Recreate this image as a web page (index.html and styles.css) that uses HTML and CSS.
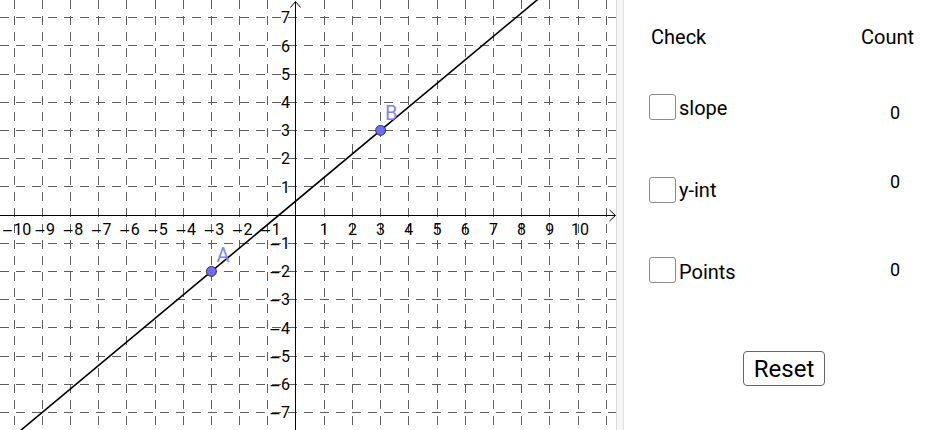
FILE: index.html
```html
<!DOCTYPE html>
<html>
<head>
<meta charset="utf-8">
<link rel="stylesheet" href="styles.css">
</head>
<body>
<div class="app">
  <div class="graph">
    <svg width="616" height="430" viewBox="0 0 616 430">
      <g class="grid">
        <line x1="14" y1="0" x2="14" y2="430"/>
        <line x1="42.2" y1="0" x2="42.2" y2="430"/>
        <line x1="70.4" y1="0" x2="70.4" y2="430"/>
        <line x1="98.6" y1="0" x2="98.6" y2="430"/>
        <line x1="126.8" y1="0" x2="126.8" y2="430"/>
        <line x1="155" y1="0" x2="155" y2="430"/>
        <line x1="183.2" y1="0" x2="183.2" y2="430"/>
        <line x1="211.4" y1="0" x2="211.4" y2="430"/>
        <line x1="239.6" y1="0" x2="239.6" y2="430"/>
        <line x1="267.8" y1="0" x2="267.8" y2="430"/>
        <line x1="324.2" y1="0" x2="324.2" y2="430"/>
        <line x1="352.4" y1="0" x2="352.4" y2="430"/>
        <line x1="380.6" y1="0" x2="380.6" y2="430"/>
        <line x1="408.8" y1="0" x2="408.8" y2="430"/>
        <line x1="437" y1="0" x2="437" y2="430"/>
        <line x1="465.2" y1="0" x2="465.2" y2="430"/>
        <line x1="493.4" y1="0" x2="493.4" y2="430"/>
        <line x1="521.6" y1="0" x2="521.6" y2="430"/>
        <line x1="549.8" y1="0" x2="549.8" y2="430"/>
        <line x1="578" y1="0" x2="578" y2="430"/>
        <line x1="606.2" y1="0" x2="606.2" y2="430"/>
        <line x1="0" y1="17.6" x2="616" y2="17.6"/>
        <line x1="0" y1="45.8" x2="616" y2="45.8"/>
        <line x1="0" y1="74" x2="616" y2="74"/>
        <line x1="0" y1="102.2" x2="616" y2="102.2"/>
        <line x1="0" y1="130.4" x2="616" y2="130.4"/>
        <line x1="0" y1="158.6" x2="616" y2="158.6"/>
        <line x1="0" y1="186.8" x2="616" y2="186.8"/>
        <line x1="0" y1="243.2" x2="616" y2="243.2"/>
        <line x1="0" y1="271.4" x2="616" y2="271.4"/>
        <line x1="0" y1="299.6" x2="616" y2="299.6"/>
        <line x1="0" y1="327.8" x2="616" y2="327.8"/>
        <line x1="0" y1="356" x2="616" y2="356"/>
        <line x1="0" y1="384.2" x2="616" y2="384.2"/>
        <line x1="0" y1="412.4" x2="616" y2="412.4"/>
      </g>
      <g class="axes">
        <line x1="0" y1="215.5" x2="615" y2="215.5"/>
        <line x1="295.5" y1="2" x2="295.5" y2="430"/>
        <path class="arrow" d="M609.5 210 L615.5 215.5 L609.5 221"/>
        <path class="arrow" d="M290.5 7.5 L295.5 1.5 L300.5 7.5"/>
      </g>
      <g class="xlabels">
        <text x="16.5" y="235"><tspan class="m">−</tspan>10</text>
        <text x="44.7" y="235"><tspan class="m">−</tspan>9</text>
        <text x="72.9" y="235"><tspan class="m">−</tspan>8</text>
        <text x="101.1" y="235"><tspan class="m">−</tspan>7</text>
        <text x="129.3" y="235"><tspan class="m">−</tspan>6</text>
        <text x="157.5" y="235"><tspan class="m">−</tspan>5</text>
        <text x="185.7" y="235"><tspan class="m">−</tspan>4</text>
        <text x="213.9" y="235"><tspan class="m">−</tspan>3</text>
        <text x="242.1" y="235"><tspan class="m">−</tspan>2</text>
        <text x="270.3" y="235"><tspan class="m">−</tspan>1</text>
        <text x="324.2" y="235">1</text>
        <text x="352.4" y="235">2</text>
        <text x="380.6" y="235">3</text>
        <text x="408.8" y="235">4</text>
        <text x="437" y="235">5</text>
        <text x="465.2" y="235">6</text>
        <text x="493.4" y="235">7</text>
        <text x="521.6" y="235">8</text>
        <text x="549.8" y="235">9</text>
        <text x="580" y="235">10</text>
      </g>
      <g class="ylabels">
        <text x="290" y="23.3">7</text>
        <text x="290" y="51.5">6</text>
        <text x="290" y="79.7">5</text>
        <text x="290" y="107.9">4</text>
        <text x="290" y="136.1">3</text>
        <text x="290" y="164.3">2</text>
        <text x="290" y="192.5">1</text>
        <text x="290" y="248.9"><tspan class="m">−</tspan>1</text>
        <text x="290" y="277.1"><tspan class="m">−</tspan>2</text>
        <text x="290" y="305.3"><tspan class="m">−</tspan>3</text>
        <text x="290" y="333.5"><tspan class="m">−</tspan>4</text>
        <text x="290" y="361.7"><tspan class="m">−</tspan>5</text>
        <text x="290" y="389.9"><tspan class="m">−</tspan>6</text>
        <text x="290" y="418.1"><tspan class="m">−</tspan>7</text>
      </g>
      <line class="fline" x1="0" y1="447.6" x2="616" y2="-65.8"/>
      <circle class="pt" cx="211.4" cy="271.4" r="5"/>
      <circle class="pt" cx="380.6" cy="130.4" r="5"/>
      <text class="ptlabel" x="216.5" y="261.7">A</text>
      <text class="ptlabel" x="385" y="120">B</text>
    </svg>
  </div>
  <div class="divider"></div>
  <div class="panel">
    <div class="head">
      <span class="h-check">Check</span>
      <span class="h-count">Count</span>
    </div>
    <div class="row row1">
      <label class="opt"><span class="box"></span><span class="opt-text">slope</span></label>
      <span class="count">0</span>
    </div>
    <div class="row row2">
      <label class="opt"><span class="box"></span><span class="opt-text">y-int</span></label>
      <span class="count">0</span>
    </div>
    <div class="row row3">
      <label class="opt"><span class="box"></span><span class="opt-text">Points</span></label>
      <span class="count">0</span>
    </div>
    <div class="reset-row">
      <button class="reset">Reset</button>
    </div>
  </div>
</div>
</body>
</html>
```
FILE: styles.css
```css
html, body {
  margin: 0;
  padding: 0;
  background: #fff;
}
body {
  font-family: Roboto, "Liberation Sans", sans-serif;
  color: #000;
  overflow: hidden;
}
.app {
  display: flex;
  width: 950px;
  height: 430px;
}
.graph {
  flex: none;
  width: 616px;
  height: 430px;
  overflow: hidden;
}
.graph svg {
  display: block;
}
.grid line {
  stroke: #5e5e5e;
  stroke-width: 1;
  stroke-dasharray: 9 7;
  shape-rendering: crispEdges;
}
.axes line {
  stroke: #000;
  stroke-width: 1;
}
.axes .arrow {
  fill: none;
  stroke: #000;
  stroke-width: 1;
}
.xlabels text {
  font-family: Roboto, sans-serif;
  font-size: 16px;
  fill: #000;
  text-anchor: middle;
}
.ylabels text {
  font-family: Roboto, sans-serif;
  font-size: 16px;
  fill: #000;
  text-anchor: end;
}
.m {
  font-family: "DejaVu Sans", sans-serif;
  font-size: 14px;
}
.fline {
  stroke: #000;
  stroke-width: 1.6;
}
.pt {
  fill: #6c6cf6;
  stroke: #2a2a2a;
  stroke-width: 0.9;
}
.ptlabel {
  font-family: Roboto, sans-serif;
  font-size: 20px;
  fill: #8383ff;
}
.divider {
  flex: none;
  width: 8px;
  height: 430px;
  box-sizing: border-box;
  background: #f6f6f6;
  border-left: 1px solid #d9d9d9;
  border-right: 1px solid #e3e3e3;
}
.panel {
  flex: 1;
  display: flex;
  flex-direction: column;
  padding-top: 25px;
}
.head {
  display: flex;
  height: 24px;
  line-height: 24px;
  font-size: 20px;
  padding-left: 27px;
}
.h-check {
  width: 210px;
}
.row {
  display: flex;
  align-items: flex-start;
  height: 26px;
  padding-left: 25px;
}
.row1 { margin-top: 45px; }
.row2 { margin-top: 57px; }
.row3 { margin-top: 54px; }
.opt {
  display: flex;
  align-items: flex-start;
  width: 241px;
  flex: none;
}
.box {
  flex: none;
  width: 27px;
  height: 26px;
  box-sizing: border-box;
  border: 1px solid #8a8a8a;
  border-radius: 3px;
  margin-right: 3px;
}
.opt-text {
  font-size: 20px;
  line-height: 24px;
}
.count {
  font-size: 18px;
  line-height: 24px;
}
.row1 .opt-text { margin-top: 2px; }
.row1 .count { margin-top: 7px; }
.row2 .opt-text { margin-top: 1px; }
.row2 .count { margin-top: -7px; }
.row3 .opt-text { margin-top: 3px; }
.row3 .count { margin-top: 1px; }
.reset-row {
  margin-top: 68px;
  padding-left: 119px;
}
.reset {
  display: block;
  width: 82px;
  height: 35px;
  box-sizing: border-box;
  padding: 0;
  background: #fff;
  border: 1.5px solid #666;
  border-radius: 4px;
  font-family: Roboto, sans-serif;
  font-size: 24px;
  color: #000;
}
```
